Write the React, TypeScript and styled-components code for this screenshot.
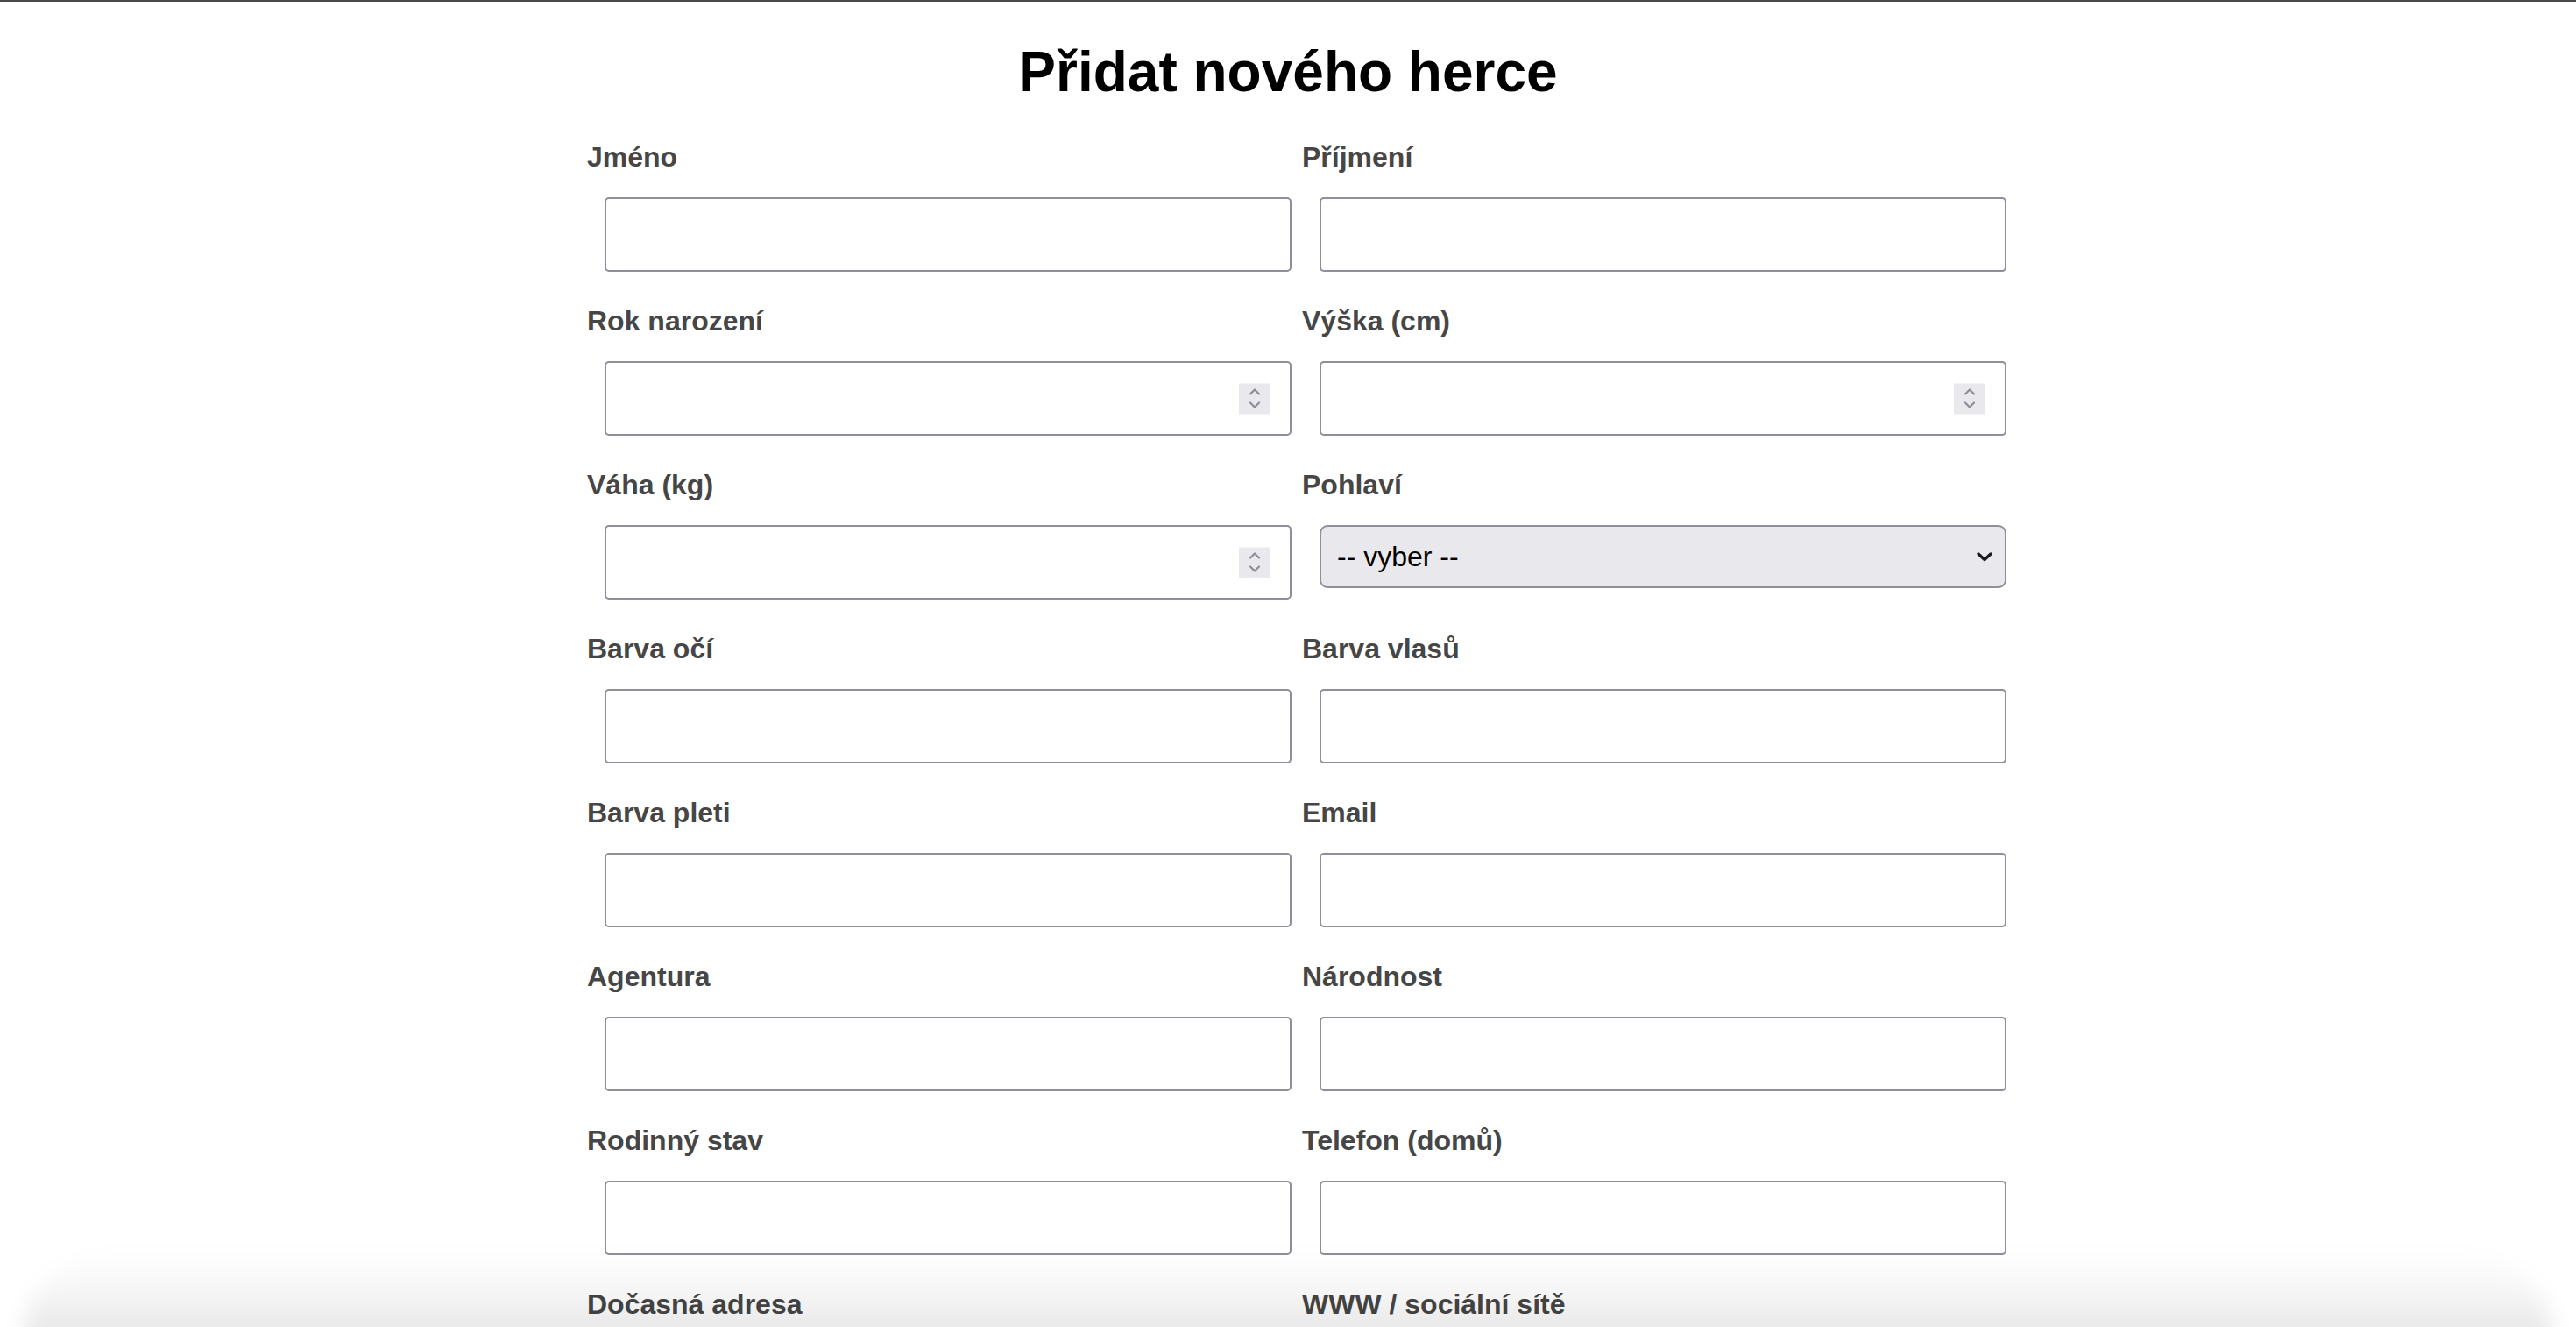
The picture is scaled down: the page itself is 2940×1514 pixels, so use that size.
import React from "react";
import styled, { createGlobalStyle } from "styled-components";

const GlobalStyle = createGlobalStyle`
  html, body {
    margin: 0;
    padding: 0;
    background: #ffffff;
  }
  body {
    font-family: "Liberation Sans", Arial, Helvetica, sans-serif;
    border-top: 2px solid #4a4a4a;
  }
  * { box-sizing: border-box; }
`;

const Page = styled.main`
  width: 1600px;
  margin: 0 auto;
  padding-top: 43px;
`;

const Title = styled.h1`
  margin: 0 0 42px;
  font-size: 64px;
  line-height: 74px;
  font-weight: 700;
  text-align: center;
  color: #000;
`;

const Form = styled.form`
  display: grid;
  grid-template-columns: 784px 784px;
  column-gap: 32px;
  row-gap: 38px;
  align-items: start;
`;

const Field = styled.div`
  display: flex;
  flex-direction: column;
  align-items: flex-start;
`;

const Label = styled.label`
  display: block;
  font-size: 32px;
  line-height: 37px;
  font-weight: 700;
  color: #464646;
`;

const Control = styled.div`
  position: relative;
  margin: 27px 0 0 20px;
  width: 784px;
`;

const TextInput = styled.input`
  display: block;
  width: 100%;
  height: 85px;
  margin: 0;
  padding: 0 20px;
  border: 2px solid #8f8e9a;
  border-radius: 5px;
  background: #ffffff;
  font-family: inherit;
  font-size: 32px;
  outline: none;
  appearance: textfield;
  -moz-appearance: textfield;
  &::-webkit-inner-spin-button,
  &::-webkit-outer-spin-button {
    -webkit-appearance: none;
    margin: 0;
  }
`;

const Spinner = styled.span`
  position: absolute;
  right: 24px;
  top: 50%;
  transform: translateY(-50%);
  width: 36px;
  height: 35px;
  background: #e9e9ed;
  display: flex;
  align-items: center;
  justify-content: center;
  pointer-events: none;
`;

const SelectBox = styled.select`
  display: block;
  width: 100%;
  height: 72px;
  margin: 0;
  padding: 0 60px 0 18px;
  border: 2px solid #8f8e9a;
  border-radius: 9px;
  background: #e9e9ed;
  color: #000;
  font-family: inherit;
  font-size: 32px;
  appearance: none;
  -webkit-appearance: none;
  outline: none;
`;

const Chevron = styled.span`
  position: absolute;
  right: 14px;
  top: 50%;
  transform: translateY(-50%);
  display: flex;
  pointer-events: none;
`;

const WindowShade = styled.div`
  position: fixed;
  left: 28px;
  right: 28px;
  bottom: -20px;
  height: 110px;
  border-radius: 140px 140px 0 0 / 90px 90px 0 0;
  background: linear-gradient(
    to bottom,
    rgba(0, 0, 0, 0) 0%,
    rgba(0, 0, 0, 0.035) 45%,
    rgba(0, 0, 0, 0.11) 100%
  );
  filter: blur(12px);
  pointer-events: none;
`;

type FieldDef = {
  label: string;
  kind?: "text" | "number" | "select";
};

const fields: FieldDef[] = [
  { label: "Jméno" },
  { label: "Příjmení" },
  { label: "Rok narození", kind: "number" },
  { label: "Výška (cm)", kind: "number" },
  { label: "Váha (kg)", kind: "number" },
  { label: "Pohlaví", kind: "select" },
  { label: "Barva očí" },
  { label: "Barva vlasů" },
  { label: "Barva pleti" },
  { label: "Email" },
  { label: "Agentura" },
  { label: "Národnost" },
  { label: "Rodinný stav" },
  { label: "Telefon (domů)" },
  { label: "Dočasná adresa" },
  { label: "WWW / sociální sítě" },
];

const SpinIcon = () => (
  <svg width="16" height="26" viewBox="0 0 16 26" fill="none">
    <path d="M3 8 L8 3 L13 8" stroke="#8d8c97" strokeWidth="2.2" strokeLinecap="round" strokeLinejoin="round" />
    <path d="M3 18 L8 23 L13 18" stroke="#8d8c97" strokeWidth="2.2" strokeLinecap="round" strokeLinejoin="round" />
  </svg>
);

const ChevronIcon = () => (
  <svg width="22" height="14" viewBox="0 0 22 14" fill="none">
    <path d="M4 4 L11 10.5 L18 4" stroke="#1a1a1a" strokeWidth="3.4" strokeLinecap="round" strokeLinejoin="round" />
  </svg>
);

const FormField = ({ label, kind = "text" }: FieldDef) => {
  const id = label.replace(/[^a-zA-Z]/g, "").toLowerCase();
  return (
    <Field>
      <Label htmlFor={id}>{label}</Label>
      <Control>
        {kind === "select" ? (
          <>
            <SelectBox id={id} defaultValue="">
              <option value="">-- vyber --</option>
              <option value="m">muž</option>
              <option value="z">žena</option>
            </SelectBox>
            <Chevron>
              <ChevronIcon />
            </Chevron>
          </>
        ) : (
          <>
            <TextInput id={id} type={kind === "number" ? "number" : "text"} />
            {kind === "number" && (
              <Spinner>
                <SpinIcon />
              </Spinner>
            )}
          </>
        )}
      </Control>
    </Field>
  );
};

export default function App() {
  return (
    <>
      <GlobalStyle />
      <Page>
        <Title>Přidat nového herce</Title>
        <Form onSubmit={(e) => e.preventDefault()}>
          {fields.map((f) => (
            <FormField key={f.label} {...f} />
          ))}
        </Form>
      </Page>
      <WindowShade />
    </>
  );
}
